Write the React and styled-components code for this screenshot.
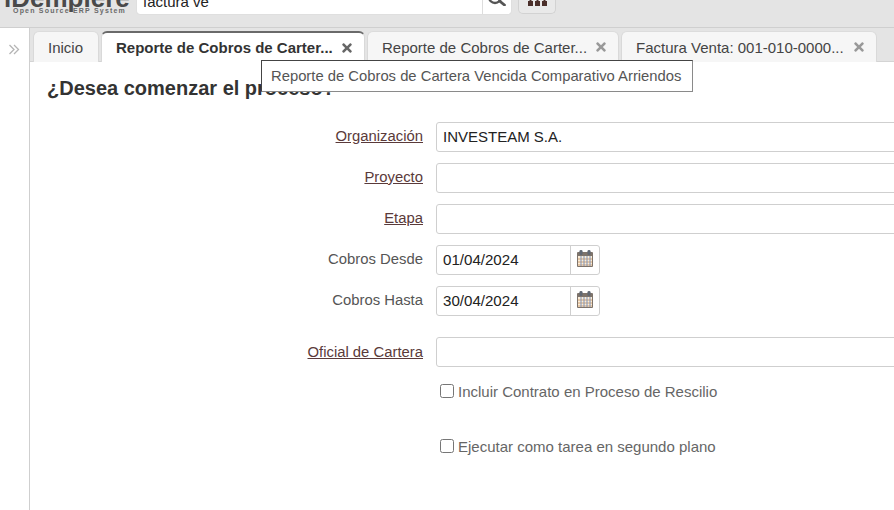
import React from "react";
import styled, { createGlobalStyle } from "styled-components";
import { FaTimes } from "react-icons/fa";

const GlobalStyle = createGlobalStyle`
  html, body {
    margin: 0;
    padding: 0;
    height: 100%;
    overflow: hidden;
    background: white;
    font-family: "Liberation Sans", Arial, sans-serif;
    color: #333;
  }
  #root {
    height: 100%;
  }
`;

const Page = styled.div`
  width: 894px;
  height: 510px;
  position: relative;
  overflow: hidden;
  display: flex;
  flex-direction: column;
`;

const Header = styled.div`
  flex: none;
  height: 28px;
  box-sizing: border-box;
  background: #e4e4e4;
  border-bottom: 1px solid #cfcfcf;
  display: flex;
  align-items: flex-end;
  overflow: hidden;
  padding-bottom: 13px;
`;

const Logo = styled.div`
  width: 137px;
  flex: none;
  height: 14px;
  position: relative;
`;

const LogoName = styled.div`
  position: absolute;
  left: 4px;
  bottom: 4px;
  font-size: 26px;
  line-height: 24px;
  font-weight: bold;
  color: #4a4a4a;
  white-space: nowrap;
`;

const LogoSub = styled.div`
  position: absolute;
  left: 13px;
  bottom: 0;
  font-size: 7px;
  line-height: 7px;
  font-weight: bold;
  letter-spacing: 1.2px;
  color: #6a6a6a;
  white-space: nowrap;
`;

const SearchBox = styled.div`
  flex: none;
  width: 374px;
  height: 30px;
  box-sizing: border-box;
  background: white;
  border-radius: 0 0 3px 3px;
  box-shadow: 0 0 1px #bbb;
  display: flex;
  align-items: flex-end;
`;

const SearchText = styled.div`
  flex: 1;
  padding-left: 6px;
  font-size: 15px;
  line-height: 15px;
  height: 15px;
  margin-bottom: 5px;
  color: #222;
`;

const SearchButton = styled.div`
  flex: none;
  width: 29px;
  height: 100%;
  border-left: 1px solid #ddd;
  display: flex;
  align-items: flex-end;
  justify-content: center;
  padding-bottom: 8px;
  box-sizing: border-box;
`;

const MenuButton = styled.div`
  flex: none;
  width: 38px;
  height: 30px;
  margin-left: 7px;
  box-sizing: border-box;
  background: #e9e9e9;
  border: 1px solid #d2d2d2;
  border-top: none;
  border-radius: 0 0 5px 5px;
  display: flex;
  align-items: flex-end;
  justify-content: center;
  padding-bottom: 7px;
`;

const Body = styled.div`
  flex: 1;
  display: flex;
  min-height: 0;
`;

const Side = styled.div`
  flex: none;
  width: 30px;
  box-sizing: border-box;
  border-right: 1px solid #cfcfcf;
  background: white;
  padding: 16px 1px 0 0;
  display: flex;
  justify-content: center;
  align-items: flex-start;
`;

const Main = styled.div`
  flex: 1;
  min-width: 0;
  display: flex;
  flex-direction: column;
`;

const TabBar = styled.div`
  flex: none;
  height: 34px;
  box-sizing: border-box;
  background: #e4e4e4;
  border-bottom: 1px solid #d4d4d4;
  padding: 3px 0 0 3px;
  display: flex;
  gap: 2px;
`;

const Tab = styled.div`
  flex: none;
  width: ${(p) => p.$width}px;
  height: 31px;
  box-sizing: border-box;
  background: ${(p) => (p.$active ? "white" : "#f6f6f6")};
  border: 1px solid #d9d9d9;
  border-bottom: none;
  border-top: ${(p) => (p.$active ? "2px solid #6a6a6a" : "1px solid #dcdcdc")};
  border-radius: 6px 6px 0 0;
  padding: 0 10px 0 14px;
  display: flex;
  align-items: center;
  justify-content: space-between;
  font-size: 15px;
  font-weight: ${(p) => (p.$active ? "bold" : "normal")};
  color: ${(p) => (p.$active ? "#333" : "#444")};
  white-space: nowrap;
`;

const Close = styled(FaTimes)`
  flex: none;
  color: ${(p) => (p.$active ? "#666" : "#999")};
`;

const Content = styled.div`
  flex: 1;
  min-height: 0;
  background: white;
  padding: 14px 0 0 17px;
  overflow: hidden;
`;

const Title = styled.h1`
  margin: 0 0 22px;
  font-size: 20px;
  line-height: 24px;
  font-weight: bold;
  color: #333;
`;

const Form = styled.div`
  margin-left: -17px;
  display: flex;
  flex-direction: column;
  gap: 11px;
`;

const Row = styled.div`
  display: flex;
  align-items: center;
  gap: 13px;
  height: 30px;
  margin-top: ${(p) => p.$gapTop || 0}px;
`;

const Label = styled.div`
  flex: none;
  width: 393px;
  text-align: right;
  font-size: 14.85px;
  color: ${(p) => (p.$link ? "#5a3a3a" : "#555")};
  text-decoration: ${(p) => (p.$link ? "underline" : "none")};
  margin-top: ${(p) => (p.$low ? "-1px" : "-3px")};
`;

const Input = styled.div`
  flex: none;
  width: 480px;
  height: 30px;
  box-sizing: border-box;
  border: 1px solid #cfcfcf;
  border-radius: 3px;
  padding: 0 6px;
  font-size: 15px;
  line-height: 28px;
  color: #222;
`;

const DateBox = styled.div`
  flex: none;
  width: 164px;
  height: 30px;
  box-sizing: border-box;
  border: 1px solid #cfcfcf;
  border-radius: 3px;
  display: flex;
`;

const DateText = styled.div`
  flex: 1;
  padding: 0 6px;
  font-size: 15.1px;
  line-height: 28px;
  color: #222;
`;

const DateButton = styled.div`
  flex: none;
  width: 28px;
  border-left: 1px solid #cfcfcf;
  display: flex;
  align-items: center;
  justify-content: center;
  padding-bottom: 4px;
`;

const CheckRow = styled.label`
  margin: ${(p) => p.$top}px 0 0 393px;
  display: flex;
  align-items: center;
  gap: 4px;
  height: 16px;
  font-size: 15px;
  color: #666;
`;

const Box = styled.span`
  flex: none;
  width: 14px;
  height: 14px;
  box-sizing: border-box;
  background: white;
  border: 1px solid #767676;
  border-radius: 2.5px;
`;

const Tooltip = styled.div`
  position: absolute;
  left: 261px;
  top: 60px;
  width: 432px;
  height: 32px;
  box-sizing: border-box;
  background: white;
  border: 1px solid #8a8a8a;
  border-top-color: #444;
  border-left-color: #444;
  padding-left: 9px;
  font-size: 14.8px;
  line-height: 30px;
  color: #555;
  white-space: nowrap;
`;

function CalendarIcon() {
  return (
    <svg width="18" height="19" viewBox="0 0 18 19">
      <rect x="1" y="3" width="16" height="15" rx="1" fill="#7d736b" />
      <rect x="2" y="7" width="14" height="10" fill="#f9ecd8" />
      <path d="M2 10h14M2 13h14M2 16h14" stroke="#d2a274" strokeWidth="1" />
      <path d="M5 7v10M8 7v10M11 7v10M14 7v10" stroke="#7f93b8" strokeWidth="1" />
      <rect x="3.500" y="1" width="3" height="5" rx="1.300" fill="#5f6773" />
      <rect x="11.500" y="1" width="3" height="5" rx="1.300" fill="#5f6773" />
    </svg>
  );
}

function SearchIcon() {
  return (
    <svg width="20" height="8" viewBox="0 0 20 8">
      <circle cx="8" cy="-1" r="6" fill="none" stroke="#555" strokeWidth="2.400" />
      <path d="M12.500 3l5 4" stroke="#555" strokeWidth="2.800" strokeLinecap="round" />
    </svg>
  );
}

function MenuIcon() {
  return (
    <svg width="19" height="7" viewBox="0 0 19 7">
      <rect x="0" y="2" width="5" height="5" fill="#4b2f2a" />
      <rect x="7" y="2" width="5" height="5" fill="#4b2f2a" />
      <rect x="14" y="2" width="5" height="5" fill="#4b2f2a" />
      <rect x="1.500" y="0" width="2" height="2" fill="#4b2f2a" />
      <rect x="8.500" y="0" width="2" height="2" fill="#4b2f2a" />
      <rect x="15.500" y="0" width="2" height="2" fill="#4b2f2a" />
    </svg>
  );
}

function ChevronsIcon() {
  return (
    <svg width="12" height="12" viewBox="0 0 12 12" fill="none" stroke="#b5b5b5" strokeWidth="1.300">
      <path d="M1.500 1L6 5.500 1.500 10M6 1l4.500 4.500L6 10" />
    </svg>
  );
}

const tabs = [
  { text: "Reporte de Cobros de Carter...", width: 264, active: true },
  { text: "Reporte de Cobros de Carter...", width: 252 },
  { text: "Factura Venta: 001-010-0000...", width: 256 },
];

export default function App() {
  return (
    <Page>
      <GlobalStyle />
      <Header>
        <Logo>
          <LogoName>iDempiere</LogoName>
          <LogoSub>Open Source ERP System</LogoSub>
        </Logo>
        <SearchBox>
          <SearchText>factura ve</SearchText>
          <SearchButton>
            <SearchIcon />
          </SearchButton>
        </SearchBox>
        <MenuButton>
          <MenuIcon />
        </MenuButton>
      </Header>
      <Body>
        <Side>
          <ChevronsIcon />
        </Side>
        <Main>
          <TabBar>
            <Tab $width={66}>Inicio</Tab>
            {tabs.map((t, i) => (
              <Tab key={i} $width={t.width} $active={t.active}>
                <span>{t.text}</span>
                <Close size={14} $active={t.active} />
              </Tab>
            ))}
          </TabBar>
          <Content>
            <Title>¿Desea comenzar el proceso?</Title>
            <Form>
              <Row>
                <Label $link>Organización</Label>
                <Input>INVESTEAM S.A.</Input>
              </Row>
              <Row>
                <Label $link>Proyecto</Label>
                <Input />
              </Row>
              <Row>
                <Label $link>Etapa</Label>
                <Input />
              </Row>
              <Row>
                <Label>Cobros Desde</Label>
                <DateBox>
                  <DateText>01/04/2024</DateText>
                  <DateButton><CalendarIcon /></DateButton>
                </DateBox>
              </Row>
              <Row>
                <Label>Cobros Hasta</Label>
                <DateBox>
                  <DateText>30/04/2024</DateText>
                  <DateButton><CalendarIcon /></DateButton>
                </DateBox>
              </Row>
              <Row $gapTop={10}>
                <Label $link $low>Oficial de Cartera</Label>
                <Input />
              </Row>
            </Form>
            <CheckRow $top={16}>
              <Box />
              Incluir Contrato en Proceso de Rescilio
            </CheckRow>
            <CheckRow $top={39}>
              <Box />
              Ejecutar como tarea en segundo plano
            </CheckRow>
          </Content>
        </Main>
      </Body>
      <Tooltip>Reporte de Cobros de Cartera Vencida Comparativo Arriendos</Tooltip>
    </Page>
  );
}
